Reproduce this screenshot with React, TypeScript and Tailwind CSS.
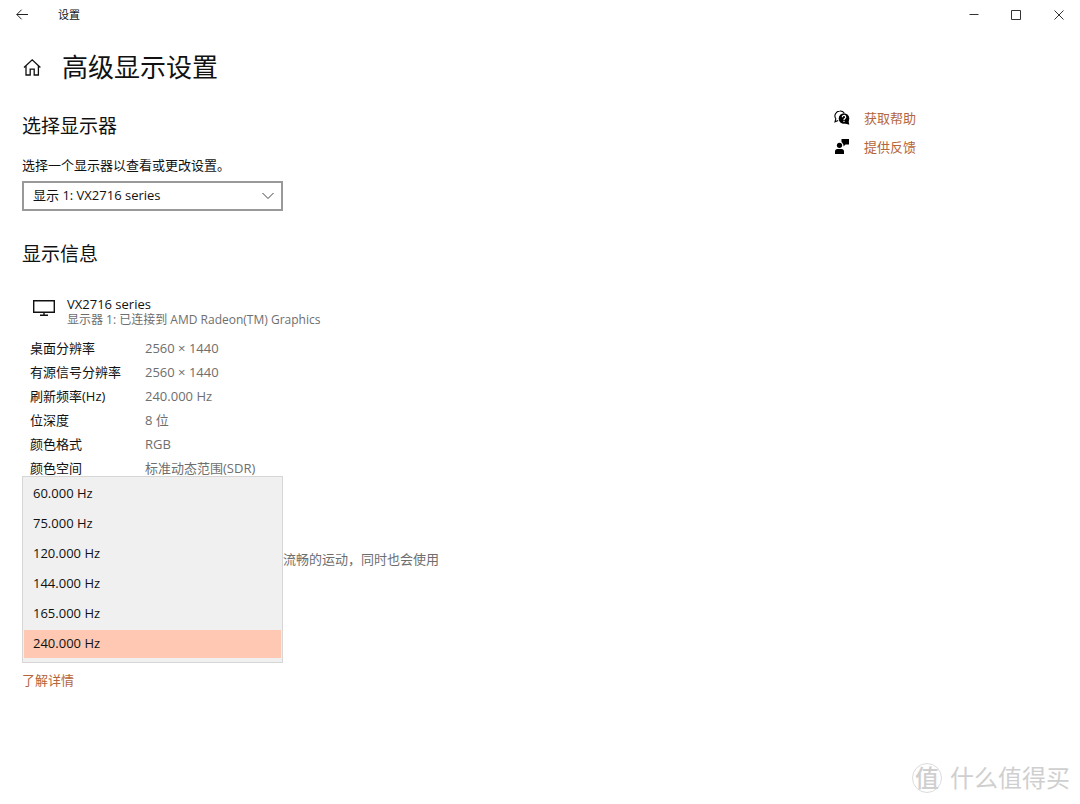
import React from 'react';

const displayInfo = [
    { label: '桌面分辨率', value: '2560 × 1440' },
    { label: '有源信号分辨率', value: '2560 × 1440' },
    { label: '刷新频率(Hz)', value: '240.000 Hz' },
    { label: '位深度', value: '8 位' },
    { label: '颜色格式', value: 'RGB' },
    { label: '颜色空间', value: '标准动态范围(SDR)' },
];

const refreshRates = ['60.000 Hz', '75.000 Hz', '120.000 Hz', '144.000 Hz', '165.000 Hz', '240.000 Hz'];

const TitleBar: React.FC = () => (
    <header className="flex h-[30px] items-center justify-between pl-4">
        <div className="flex items-center gap-[30px]">
            <button aria-label="返回">
                <svg width="12" height="12" viewBox="0 0 12 12" fill="none" stroke="#222" strokeWidth="1">
                    <path d="M12 5.5H.8M5.6.7L.8 5.5l4.8 4.8" />
                </svg>
            </button>
            <span className="text-[11px] leading-4">设置</span>
        </div>
        <div className="flex">
            <button aria-label="最小化" className="flex h-[30px] w-[42px] items-center justify-center">
                <svg width="10" height="10" viewBox="0 0 10 10" stroke="#333">
                    <path d="M.5 4.5h9" />
                </svg>
            </button>
            <button aria-label="最大化" className="flex h-[30px] w-[42px] items-center justify-center">
                <svg width="10" height="10" viewBox="0 0 10 10" fill="none" stroke="#333">
                    <path d="M.5.5h9v9h-9z" />
                </svg>
            </button>
            <button aria-label="关闭" className="flex h-[30px] w-[43px] items-center justify-center">
                <svg width="10" height="10" viewBox="0 0 10 10" stroke="#333">
                    <path d="M.5.5l9 9M9.5.5l-9 9" />
                </svg>
            </button>
        </div>
    </header>
);

const HelpLinks: React.FC = () => (
    <aside className="w-[246px] shrink-0 text-[13px] leading-5 text-[#b5653a]">
        <a href="#help" className="flex h-[29px] items-center gap-[14px]">
            <svg width="16" height="16" viewBox="0 0 16 16" fill="none">
                <path d="M4.2 10.6L1 11.8l.8-3A5 5 0 0 1 5.8 1a5 5 0 0 1 4.4 1.9" stroke="#000" strokeWidth="1.1" />
                <circle cx="10" cy="8.5" r="5.3" fill="#000" />
                <path d="M11 13.5l4.3 1.3-.9-4.3z" fill="#000" />
                <path d="M8.3 7.3a1.7 1.7 0 1 1 2.6 1.3c-.6.4-.9.6-.9 1.3M10 10.7v1.2" stroke="#fff" strokeWidth="1.2" />
            </svg>
            获取帮助
        </a>
        <a href="#feedback" className="flex h-[29px] items-center gap-[14px]">
            <svg width="16" height="16" viewBox="0 0 16 16" fill="#000">
                <circle cx="5.5" cy="6.3" r="2.6" />
                <path d="M1 15v-2.5a2.5 2.5 0 0 1 2.5-2.5h4a2.5 2.5 0 0 1 2.5 2.500V15zM7.500 0H15v5.500h-3.500l-2 2v-2H9A4 4 0 0 0 7.500 3z" />
            </svg>
            提供反馈
        </a>
    </aside>
);

const DisplayPicker: React.FC = () => (
    <section>
        <h2 className="text-[19px] leading-7">选择显示器</h2>
        <label htmlFor="display" className="mt-[15px] block leading-5">
            选择一个显示器以查看或更改设置。
        </label>
        <div className="relative mt-[6px] w-[261px]">
            <select
                id="display"
                className="block h-[30px] w-full appearance-none border-2 border-[#999] bg-white pl-[9px] pr-8"
            >
                <option>显示 1: VX2716 series</option>
            </select>
            <svg
                className="pointer-events-none absolute right-2 top-[11px]"
                width="13"
                height="8"
                viewBox="0 0 13 8"
                fill="none"
                stroke="#444"
            >
                <path d="M.5 1L6 6.5 11.5 1" />
            </svg>
        </div>
    </section>
);

const RefreshRateList: React.FC = () => (
    <div
        role="listbox"
        aria-label="刷新频率"
        className="flex w-[261px] shrink-0 flex-col gap-[2px] border border-[#d6d6d6] bg-[#f0f0f0] px-px pb-1 pt-[3px]"
    >
        {refreshRates.map((rate) => (
            <button
                key={rate}
                role="option"
                aria-selected={rate === '240.000 Hz'}
                className={`h-7 pl-[9px] text-left ${rate === '240.000 Hz' ? 'bg-[#fec8b2]' : 'hover:bg-[#e2e2e2]'}`}
            >
                {rate}
            </button>
        ))}
    </div>
);

const Watermark: React.FC = () => (
    <div className="absolute bottom-[10px] right-[10px] flex items-center gap-2 text-[#cfcfcf]">
        <span className="flex size-[30px] items-center justify-center rounded-full border border-[#dcdcdc] text-[24px] font-medium leading-none">
            值
        </span>
        <span className="text-[24px] leading-8">什么值得买</span>
    </div>
);

const App: React.FC = () => (
    <div className="relative min-h-screen bg-white font-['Open_Sans','Noto_Sans_CJK_SC',sans-serif] text-[13px] text-[#111]">
        <TitleBar />
        <div className="flex">
            <main className="min-w-0 flex-1 pl-[22px]">
                <div className="flex h-[74px] items-center gap-5">
                    <a href="#home" aria-label="主页">
                        <svg width="20" height="18" viewBox="0 0 20 18" fill="none" stroke="#111" strokeWidth="1.3">
                            <path d="M2 9.5L10.2 1.8l8.2 7.7M4 8v9h4.2v-5.8h4V17h4.2V8" />
                        </svg>
                    </a>
                    <h1 className="text-[26px] leading-9">高级显示设置</h1>
                </div>

                <div className="mt-2">
                    <DisplayPicker />
                </div>

                <section className="mt-[29px]">
                    <h2 className="text-[19px] leading-7">显示信息</h2>
                    <div className="mt-7 flex items-start gap-3 pl-[11px]">
                        <svg width="22" height="22" viewBox="0 0 22 22" fill="none" stroke="#111" strokeWidth="1.4">
                            <path d="M.7 4.7h20.6v11.6H.7zM11 16.3v3M7 19.3h8" />
                        </svg>
                        <div className="leading-4">
                            <div>VX2716 series</div>
                            <div className="text-[12px] leading-4 text-[#6e6e6e]">
                                显示器 1: 已连接到 AMD Radeon(TM) Graphics
                            </div>
                        </div>
                    </div>
                    <table className="ml-2 mt-2 border-collapse">
                        <tbody>
                            {displayInfo.map((row) => (
                                <tr key={row.label} className="h-6 leading-6">
                                    <th className="w-[115px] p-0 text-left font-normal">{row.label}</th>
                                    <td className="p-0 text-[#6e6e6e]">{row.value}</td>
                                </tr>
                            ))}
                        </tbody>
                    </table>
                </section>

                {/* Open drop-down sits slightly over the last table row */}
                <section className="relative -mt-1 flex">
                    <RefreshRateList />
                    <p className="pt-[73px] leading-5 text-[#6e6e6e]">流畅的运动，同时也会使用</p>
                </section>
                <a href="#more" className="mt-[7px] inline-block leading-5 text-[#b5653a]">
                    了解详情
                </a>
            </main>
            <div className="pt-[73px]">
                <HelpLinks />
            </div>
        </div>
        <Watermark />
    </div>
);

export default App;
